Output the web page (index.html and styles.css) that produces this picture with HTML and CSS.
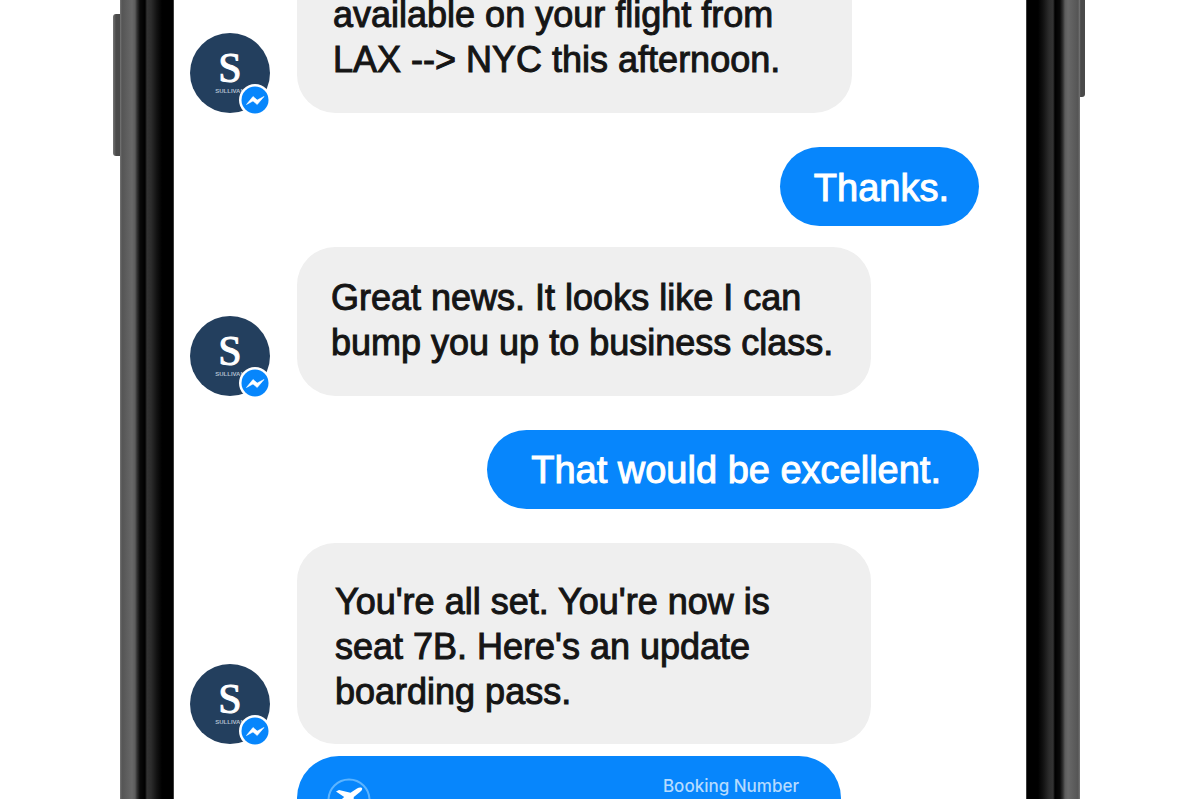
FILE: index.html
```html
<!DOCTYPE html>
<html lang="en">
<head>
    <meta charset="UTF-8">
    <meta name="viewport" content="width=device-width, initial-scale=1.0">
    <title>Messenger Conversation</title>
    <link rel="stylesheet" href="styles.css">
</head>
<body>
    <svg class="symbols" aria-hidden="true">
        <symbol id="badge" viewBox="0 0 32 32">
            <circle cx="16" cy="16" r="16" fill="#fff"></circle>
            <circle cx="16" cy="16" r="13.5" fill="#0786fc"></circle>
            <path d="M7.5 20.5 14 12.5l4.2 3.6 6.8-3.6-6.8 8-4.2-3.6z" fill="#fff" stroke="#fff" stroke-width="0.6"></path>
        </symbol>
    </svg>

    <div class="phone">
        <span class="side-button side-button-left"></span>
        <span class="side-button side-button-right"></span>
        <div class="bezel bezel-left"></div>

        <main class="chat">
            <div class="row received first">
                <div class="avatar">
                    <span class="initial">S</span>
                    <span class="brand">SULLIVAN</span>
                    <svg class="badge"><use href="#badge"></use></svg>
                </div>
                <p class="bubble">available on your flight from<br>LAX --&gt; NYC this afternoon.</p>
            </div>

            <div class="row sent">
                <p class="bubble">Thanks.</p>
            </div>

            <div class="row received close">
                <div class="avatar">
                    <span class="initial">S</span>
                    <span class="brand">SULLIVAN</span>
                    <svg class="badge"><use href="#badge"></use></svg>
                </div>
                <p class="bubble wide">Great news. It looks like I can<br>bump you up to business class.</p>
            </div>

            <div class="row sent">
                <p class="bubble long">That would be excellent.</p>
            </div>

            <div class="row received">
                <div class="avatar">
                    <span class="initial">S</span>
                    <span class="brand">SULLIVAN</span>
                    <svg class="badge"><use href="#badge"></use></svg>
                </div>
                <p class="bubble wide tall">You're all set. You're now is<br>seat 7B. Here's an update<br>boarding pass.</p>
            </div>

            <section class="pass">
                <svg class="plane" viewBox="0 0 44 44" fill="none">
                    <circle cx="22" cy="22" r="20.5" stroke="#5cb4ff" stroke-width="2"></circle>
                    <path d="M9 13.5l3-1.4 11.5 2.6 6.5-4.2c2-1.4 5.4-1.4 5.2.4-.2 1.2-1.2 2.2-2.2 3l-6.2 5-1 14-3 2-2.6-11.8-6 4.2.2 4-2 1.4-2.2-5.2-5-2.4 1.8-1.6 4.2.6 6-5z" fill="#fff"></path>
                </svg>
                <span class="pass-label">Booking Number</span>
            </section>
        </main>

        <div class="bezel bezel-right"></div>
    </div>
</body>
</html>
```

FILE: styles.css
```css
:root {
    --blue: #0786fc;
    --grey: #efefef;
    --navy: #233f5e;
    --text-color: #151515;
}

* {
    box-sizing: border-box;
}

body {
    margin: 0;
    background-color: white;
    color: var(--text-color);
    font-family: "Liberation Sans", Arial, sans-serif;
    overflow: hidden;
}

.symbols {
    display: none;
}

/* Phone frame */
.phone {
    position: relative;
    display: flex;
    width: 80%;
    height: 100vh;
    margin: 0 auto;
}

.bezel {
    flex: 0 0 54px;
    background: linear-gradient(to right, #777 0, #555 2px, #686868 12px, #5c5c5c 15px, #333 17px, #0a0a0a 20px, #000 25px, #333 27px, #2c2c2c 31px, #111 37px, #000 42px, #000 53px, #777 54px);
}

.bezel-right {
    transform: scaleX(-1);
}

.side-button {
    position: absolute;
    top: 0;
    width: 7px;
    background: linear-gradient(to right, #777, #4a4a4a 3px);
}

.side-button-left {
    top: 14px;
    left: -7px;
    height: 142px;
    border-radius: 3px 0 0 3px;
}

.side-button-right {
    right: -5px;
    height: 97px;
    border-radius: 0 0 3px 0;
}

/* Conversation */
.chat {
    flex: 1;
    min-width: 0;
    padding: 0 47px 0 16px;
    overflow: hidden;
}

.row {
    display: flex;
    align-items: flex-end;
    gap: 27px;
    margin-top: 34px;
}

.row.first {
    margin-top: -36px;
}

.row.close {
    margin-top: 21px;
}

.row.sent {
    justify-content: flex-end;
}

.bubble {
    margin: 0;
    padding: 28px 0 31px 36px;
    width: 555px;
    border-radius: 38px;
    background-color: var(--grey);
    font-size: 36px;
    line-height: 45px;
    white-space: nowrap;
    -webkit-text-stroke: 1px currentColor;
}

.bubble.wide {
    width: 574px;
    padding-left: 34px;
}

.bubble.tall {
    padding: 36px 0 30px 38px;
}

.sent .bubble {
    width: auto;
    padding: 19px 30px 15px 34px;
    border-radius: 40px;
    background-color: var(--blue);
    color: white;
    font-size: 38px;
}

.sent .bubble.long {
    padding: 18px 38px 16px 44px;
}

.avatar {
    position: relative;
    display: flex;
    flex: 0 0 80px;
    flex-direction: column;
    align-items: center;
    height: 80px;
    padding-top: 15px;
    border-radius: 50%;
    background-color: var(--navy);
    color: white;
}

.initial {
    font-family: "Liberation Serif", "Times New Roman", serif;
    font-size: 42px;
    line-height: 40px;
    -webkit-text-stroke: 1px currentColor;
}

.brand {
    color: #aebdcd;
    font-size: 6px;
    font-weight: bold;
    line-height: 6px;
}

.badge {
    position: absolute;
    right: -1px;
    bottom: -3px;
    width: 32px;
    height: 32px;
}

/* Boarding pass */
.pass {
    display: flex;
    justify-content: space-between;
    align-items: flex-start;
    width: 544px;
    height: 300px;
    margin: 12px 0 0 107px;
    padding: 22px 42px 0 30px;
    border-radius: 42px;
    background-color: var(--blue);
}

.plane {
    width: 44px;
    height: 44px;
}

.pass-label {
    color: #b5dbff;
    font-family: Inter, sans-serif;
    font-size: 17px;
    font-weight: 500;
    line-height: 17px;
}
```
